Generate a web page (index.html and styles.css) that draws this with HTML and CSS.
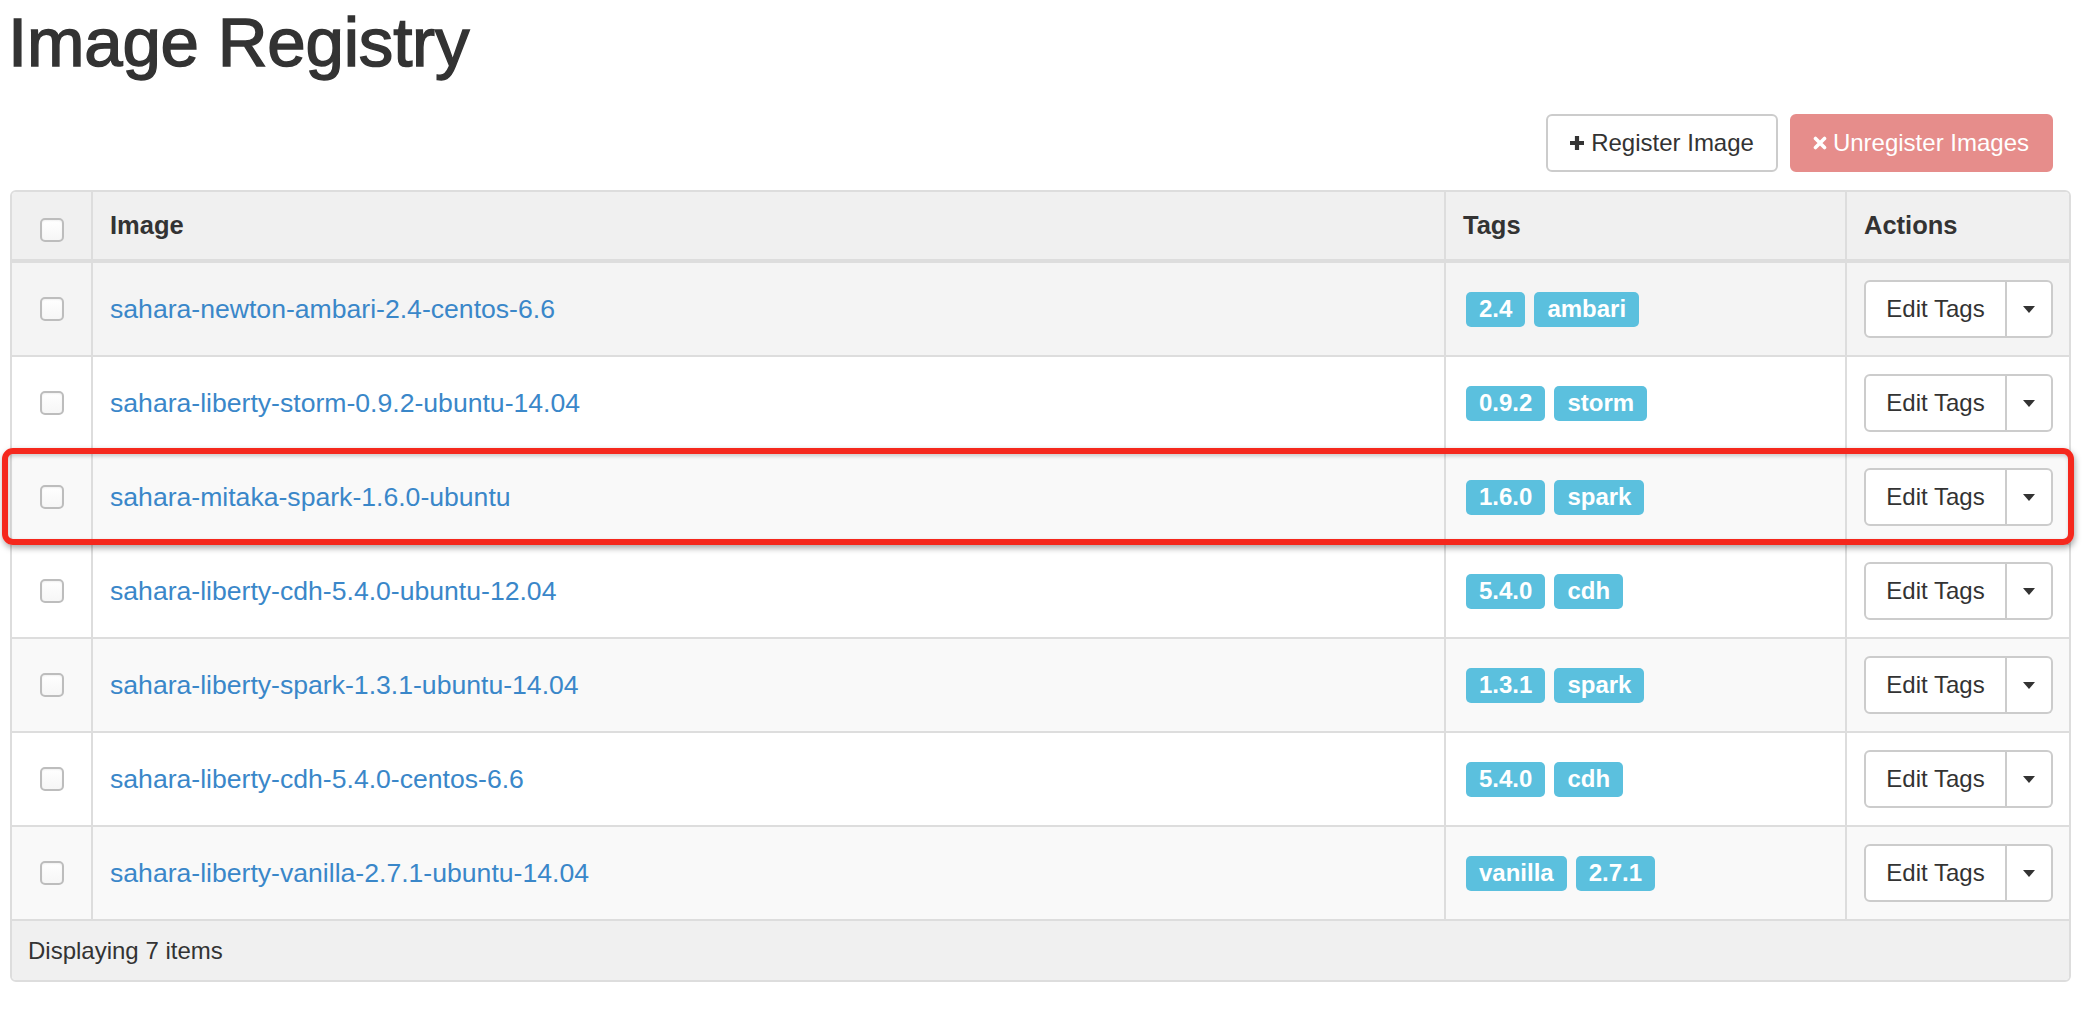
FILE: index.html
```html
<!DOCTYPE html>
<html lang="en">
<head>
<meta charset="utf-8">
<title>Image Registry</title>
<link rel="stylesheet" href="styles.css">
</head>
<body>
<div class="page">
  <h1 class="title">Image Registry</h1>
  <div class="toolbar">
    <button class="btn btn-default">
      <svg class="ico-plus" viewBox="0 0 16 16" width="16" height="16"><path d="M8 1v14M1 8h14" stroke="#333" stroke-width="4.2" fill="none"/></svg>
      Register Image
    </button>
    <button class="btn btn-danger">
      <svg class="ico-x" viewBox="0 0 14 14" width="14" height="14"><path d="M2.5 2.5l9 9M11.5 2.5l-9 9" stroke="#fff" stroke-width="3.6" stroke-linecap="round" fill="none"/></svg>
      Unregister Images
    </button>
  </div>

  <table class="table">
    <colgroup>
      <col class="c-check">
      <col class="c-image">
      <col class="c-tags">
      <col class="c-actions">
    </colgroup>
    <thead>
      <tr>
        <th class="col-check"><div class="inner center"><input type="checkbox" class="cbx"></div></th>
        <th><div class="inner">Image</div></th>
        <th><div class="inner">Tags</div></th>
        <th><div class="inner">Actions</div></th>
      </tr>
    </thead>
    <tbody>
      <tr class="hover">
        <td class="col-check"><div class="inner center"><input type="checkbox" class="cbx"></div></td>
        <td><div class="inner"><a href="#">sahara-newton-ambari-2.4-centos-6.6</a></div></td>
        <td class="col-tags"><div class="inner"><span class="tag">2.4</span><span class="tag">ambari</span></div></td>
        <td class="col-actions"><div class="inner"><div class="btn-group"><button class="btn btn-edit">Edit Tags</button><button class="btn btn-caret"><span class="caret"></span></button></div></div></td>
      </tr>
      <tr>
        <td class="col-check"><div class="inner center"><input type="checkbox" class="cbx"></div></td>
        <td><div class="inner"><a href="#">sahara-liberty-storm-0.9.2-ubuntu-14.04</a></div></td>
        <td class="col-tags"><div class="inner"><span class="tag">0.9.2</span><span class="tag">storm</span></div></td>
        <td class="col-actions"><div class="inner"><div class="btn-group"><button class="btn btn-edit">Edit Tags</button><button class="btn btn-caret"><span class="caret"></span></button></div></div></td>
      </tr>
      <tr>
        <td class="col-check"><div class="inner center"><input type="checkbox" class="cbx"></div></td>
        <td><div class="inner"><a href="#">sahara-mitaka-spark-1.6.0-ubuntu</a></div></td>
        <td class="col-tags"><div class="inner"><span class="tag">1.6.0</span><span class="tag">spark</span></div></td>
        <td class="col-actions"><div class="inner"><div class="btn-group"><button class="btn btn-edit">Edit Tags</button><button class="btn btn-caret"><span class="caret"></span></button></div></div></td>
      </tr>
      <tr>
        <td class="col-check"><div class="inner center"><input type="checkbox" class="cbx"></div></td>
        <td><div class="inner"><a href="#">sahara-liberty-cdh-5.4.0-ubuntu-12.04</a></div></td>
        <td class="col-tags"><div class="inner"><span class="tag">5.4.0</span><span class="tag">cdh</span></div></td>
        <td class="col-actions"><div class="inner"><div class="btn-group"><button class="btn btn-edit">Edit Tags</button><button class="btn btn-caret"><span class="caret"></span></button></div></div></td>
      </tr>
      <tr>
        <td class="col-check"><div class="inner center"><input type="checkbox" class="cbx"></div></td>
        <td><div class="inner"><a href="#">sahara-liberty-spark-1.3.1-ubuntu-14.04</a></div></td>
        <td class="col-tags"><div class="inner"><span class="tag">1.3.1</span><span class="tag">spark</span></div></td>
        <td class="col-actions"><div class="inner"><div class="btn-group"><button class="btn btn-edit">Edit Tags</button><button class="btn btn-caret"><span class="caret"></span></button></div></div></td>
      </tr>
      <tr>
        <td class="col-check"><div class="inner center"><input type="checkbox" class="cbx"></div></td>
        <td><div class="inner"><a href="#">sahara-liberty-cdh-5.4.0-centos-6.6</a></div></td>
        <td class="col-tags"><div class="inner"><span class="tag">5.4.0</span><span class="tag">cdh</span></div></td>
        <td class="col-actions"><div class="inner"><div class="btn-group"><button class="btn btn-edit">Edit Tags</button><button class="btn btn-caret"><span class="caret"></span></button></div></div></td>
      </tr>
      <tr>
        <td class="col-check"><div class="inner center"><input type="checkbox" class="cbx"></div></td>
        <td><div class="inner"><a href="#">sahara-liberty-vanilla-2.7.1-ubuntu-14.04</a></div></td>
        <td class="col-tags"><div class="inner"><span class="tag">vanilla</span><span class="tag">2.7.1</span></div></td>
        <td class="col-actions"><div class="inner"><div class="btn-group"><button class="btn btn-edit">Edit Tags</button><button class="btn btn-caret"><span class="caret"></span></button></div></div></td>
      </tr>
    </tbody>
    <tfoot>
      <tr>
        <td colspan="4"><div class="inner foot">Displaying 7 items</div></td>
      </tr>
    </tfoot>
  </table>

  <div class="highlight"></div>
</div>
</body>
</html>
```

FILE: styles.css
```css
* { box-sizing: border-box; }

html, body {
  margin: 0;
  padding: 0;
  background: #fff;
}

body {
  font-family: "Liberation Sans", Arial, Helvetica, sans-serif;
  color: #333;
}

.page {
  position: relative;
  padding: 9px 15px 0 10px;
}

.title {
  margin: 0 0 0 -2px;
  font-size: 69px;
  line-height: 68px;
  font-weight: 400;
  color: #333;
  -webkit-text-stroke: 1.5px #333;
  letter-spacing: -0.2px;
}

.toolbar {
  display: flex;
  justify-content: flex-end;
  gap: 12px;
  margin-top: 37px;
  padding-right: 18px;
}

.btn {
  font-family: "Liberation Sans", Arial, Helvetica, sans-serif;
  font-size: 24px;
  color: #333;
  background: #fff;
  border: 2px solid #ccc;
  border-radius: 6px;
  height: 58px;
  display: inline-flex;
  align-items: center;
  justify-content: center;
  cursor: pointer;
  padding: 0;
}

.toolbar .btn {
  padding: 0 22px 0 21px;
  gap: 6px;
}

.btn-danger {
  background: #e68d8b;
  border-color: #e68d8b;
  color: #fff;
}

.ico-plus { display: block; margin-top: -1px; }
.ico-x { display: block; }

.table {
  margin-top: 18px;
  width: 2061px;
  border-collapse: separate;
  border-spacing: 0;
  border: 2px solid #ddd;
  border-radius: 6px;
  table-layout: fixed;
}

.c-check { width: 79px; }
.c-tags { width: 401px; }
.c-actions { width: 224px; }

.table th,
.table td {
  padding: 0 17px;
  text-align: left;
  vertical-align: middle;
}

.table th + th,
.table td + td {
  border-left: 2px solid #ddd;
}

.table th {
  background: #f0f0f0;
  border-bottom: 4px solid #ddd;
  font-size: 25.5px;
  font-weight: 700;
  color: #333;
}

.table thead th:first-child { border-top-left-radius: 4px; }
.table thead th:last-child { border-top-right-radius: 4px; }

.table th .inner { height: 67px; }

.table td .inner { height: 92px; }

.inner {
  display: flex;
  align-items: center;
}

.inner.center { justify-content: center; }

.table th.col-check,
.table td.col-check { padding: 0; }

.table th.col-check .inner { padding-top: 9px; }

.table tbody tr + tr td {
  border-top: 2px solid #ddd;
}

.table tbody tr:nth-child(odd) td { background: #f9f9f9; }
.table tbody tr:nth-child(even) td { background: #fff; }
.table tbody tr.hover td { background: #f4f4f4; }

.table td {
  font-size: 26.6px;
}

.table a {
  color: #3a87c9;
  text-decoration: none;
}

.cbx {
  -webkit-appearance: none;
  appearance: none;
  margin: 0;
  width: 24px;
  height: 24px;
  border: 2px solid #bdbdbd;
  border-radius: 5px;
  background: linear-gradient(#fff, #f6f6f6);
  box-shadow: inset 0 1px 2px rgba(0, 0, 0, 0.06);
}

.table td.col-tags { padding-left: 20px; }

.tag {
  display: inline-flex;
  align-items: center;
  height: 35px;
  padding: 0 13px;
  margin-right: 9px;
  background: #5bc0de;
  color: #fff;
  font-size: 24px;
  font-weight: 700;
  border-radius: 5px;
}

.btn-group {
  display: flex;
}

.btn-edit {
  width: 143px;
  border-radius: 6px 0 0 6px;
}

.btn-caret {
  width: 46px;
  border-left: none;
  border-radius: 0 6px 6px 0;
}

.caret {
  width: 0;
  height: 0;
  border-left: 6.5px solid transparent;
  border-right: 6.5px solid transparent;
  border-top: 7px solid #333;
}

.table tfoot td {
  background: #f0f0f0;
  border-top: 2px solid #ddd;
  padding-left: 16px;
  border-bottom-left-radius: 4px;
  border-bottom-right-radius: 4px;
}

.table tfoot .inner.foot {
  height: 59px;
  font-size: 24px;
  color: #333;
}

.highlight {
  position: absolute;
  left: 2px;
  top: 448px;
  width: 2072px;
  height: 97px;
  border: 6px solid #f5281d;
  border-radius: 11px;
  box-shadow: 1px 3px 6px rgba(0, 0, 0, 0.35), inset 1px 2px 4px rgba(0, 0, 0, 0.2);
  pointer-events: none;
}
```
